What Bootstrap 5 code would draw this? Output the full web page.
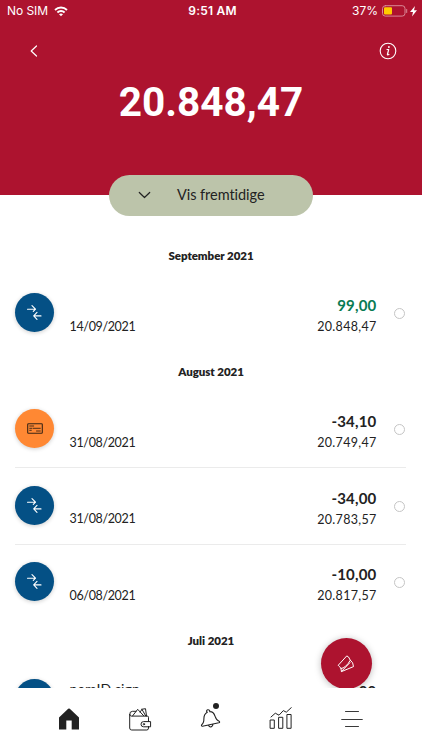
<!DOCTYPE html>
<html lang="da">
<head>
<meta charset="utf-8">
<meta name="viewport" content="width=device-width, initial-scale=1">
<title>Konto</title>
<link href="https://cdn.jsdelivr.net/npm/bootstrap@5.3.0/dist/css/bootstrap.min.css" rel="stylesheet">
<style>
body{font-family:Lato,sans-serif;color:#222;background:#fff;height:750px;overflow:hidden}
svg{display:block;flex:none;fill:none;stroke:currentColor;stroke-linecap:round;stroke-linejoin:round}
.hero{height:194.5px;background:#ad132f;flex:none}
.status{font-family:Inter,sans-serif;height:22px;font-size:12px;line-height:22px;padding:0 4px 0 7px}
.status>div{flex:1 1 0}
.carrier{gap:6px;letter-spacing:-.05px}
.wifi{stroke-linecap:butt}
.clock{font-weight:600;letter-spacing:.2px}
.tools{height:58px;padding:0 25px 0 29px}
.balance{font:700 40.5px/44px Roboto,sans-serif}
.future{width:204px;height:41px;border-radius:21px;background:#bcc4aa;color:#222;margin-top:-20px;font-size:14.5px;z-index:1;padding:0 0 0 29px;flex:none}
.future:hover{background:#b2bb9f}
.future span{margin-left:26px;letter-spacing:-.05px}
.feed{height:472.5px;padding-top:20px;flex:none}
.month{font-size:11.5px;font-weight:800;line-height:16px;height:16px;margin:12px 0;letter-spacing:-.05px;flex:none}
.entry{height:76.4px;margin:0 16px 0 15.4px;flex:none;border-bottom:1px solid #ebebeb}
.entry.final{border-color:transparent}
.disc{width:39px;height:39px;margin-top:17.5px;box-shadow:0 1px 4px #0003;background:#045085;flex:none}
.disc.orange{background:#ff8833;color:#3a2414}
.when{font-size:12.5px;line-height:16px;margin:43px 0 0 15.2px;letter-spacing:-.36px}
.when.title{font-size:14px;margin-top:20px;letter-spacing:.1px}
.sum{margin-top:19.6px;margin-right:17px}
.sum b{display:block;font-size:15px;font-weight:700;line-height:20px;letter-spacing:.2px}
.sum span{display:block;font-size:12.5px;line-height:16px;margin-top:3.8px;letter-spacing:.3px}
.sum .gain{color:#087b53}
.pick{width:11px;height:11px;border:1px solid #c5c5c5;margin:32.5px 1.5px 0 0;flex:none}
.fab{width:51px;height:51px;background:#ad132f;right:50.5px;top:422.5px;box-shadow:0 1px 7px #0004}
.tabs{height:62px;background:#fff;flex:none;padding-left:33.6px}
.tabs>a{width:70.8px;height:62px;color:#222}
.alert-dot{width:6px;height:6px;background:#222;left:38px;top:15px}
</style>
</head>
<body class="d-flex flex-column">
<svg width="0" height="0" class="position-absolute"><defs>
<g id="swap"><path d="M.5 4.2h8M5 .7l3.500 3.500-2.200 2.200M14 10.900H6.800M10 7.400l-3.300 3.500 3.300 3.400"/></g>
</defs></svg>
<header class="hero text-white">
<div class="status d-flex">
<div class="carrier d-flex align-items-center"><span>No SIM</span><svg class="wifi" width="14" height="11" viewBox="0 0 14 11" stroke-width="1.8"><path d="M1 4a8.5 8.5 0 0 1 12 0M3.4 6.5a5.1 5.1 0 0 1 7.2 0"/><path d="m5 8.2q2-1.5 4 0l-2 2z" fill="currentColor" stroke="none"/></svg></div>
<div class="clock text-center">9:51 AM</div>
<div class="d-flex align-items-center justify-content-end"><span>37%</span><svg class="ms-1" width="36" height="12" viewBox="0 0 36 12"><rect x=".5" y=".7" width="22.5" height="10.4" rx="2.8" stroke="#d98997"/><rect x="2" y="2.2" width="8" height="7.4" rx="1" fill="#ffcc00" stroke="none"/><path d="M24.7 4.5v3" stroke="#d98997"/><path d="m33 1-5 6h3l-1 4.5L35 5.3h-3z" fill="#fff" stroke="none"/></svg></div>
</div>
<div class="tools d-flex justify-content-between align-items-center">
<svg width="10" height="14" viewBox="0 0 10 14" stroke-width="1.2"><path d="M7.5 2 2.2 7l5.300 5"/></svg>
<svg width="18" height="18" viewBox="0 0 18 18"><circle cx="9" cy="9" r="7.8" stroke-width="1.1"/><path d="M8 7.500h1.700L8.400 12.500q0 .8 1.500 0" stroke-width="1.2"/><circle cx="9.9" cy="5" r=".9" fill="currentColor" stroke="none"/></svg>
</div>
<div class="balance text-center">20.848,47</div>
</header>
<button class="future btn position-relative border-0 align-self-center d-flex align-items-center"><svg width="13" height="8" viewBox="0 0 13 8" stroke-width="1.2"><path d="m1.300 1.500 5.200 5 5.200-5"/></svg><span>Vis fremtidige</span></button>
<main class="feed position-relative overflow-hidden d-flex flex-column">
<div class="month text-center">September 2021</div>
<div class="entry final d-flex align-items-start">
<div class="disc rounded-circle text-white d-flex align-items-center justify-content-center"><svg width="15" height="15" viewBox="0 0 15 15" stroke-width="1.1"><use href="#swap"/></svg></div>
<div class="when">14/09/2021</div><div class="sum ms-auto text-end"><b class="gain">99,00</b><span>20.848,47</span></div><div class="pick rounded-circle"></div>
</div>
<div class="month text-center">August 2021</div>
<div class="entry d-flex align-items-start">
<div class="disc orange rounded-circle d-flex align-items-center justify-content-center"><svg width="16" height="11" viewBox="0 0 16 11"><rect x=".7" y=".7" width="14.6" height="9.6" rx=".8" stroke-width="1.1"/><path d="M2.700 3h4M2.700 5.300h2M6 5.300h7.300M2.700 7.300h1.600M9.500 8h3.800" stroke-width=".9"/></svg></div>
<div class="when">31/08/2021</div><div class="sum ms-auto text-end"><b>-34,10</b><span>20.749,47</span></div><div class="pick rounded-circle"></div>
</div>
<div class="entry d-flex align-items-start">
<div class="disc rounded-circle text-white d-flex align-items-center justify-content-center"><svg width="15" height="15" viewBox="0 0 15 15" stroke-width="1.1"><use href="#swap"/></svg></div>
<div class="when">31/08/2021</div><div class="sum ms-auto text-end"><b>-34,00</b><span>20.783,57</span></div><div class="pick rounded-circle"></div>
</div>
<div class="entry final d-flex align-items-start">
<div class="disc rounded-circle text-white d-flex align-items-center justify-content-center"><svg width="15" height="15" viewBox="0 0 15 15" stroke-width="1.1"><use href="#swap"/></svg></div>
<div class="when">06/08/2021</div><div class="sum ms-auto text-end"><b>-10,00</b><span>20.817,57</span></div><div class="pick rounded-circle"></div>
</div>
<div class="month text-center">Juli 2021</div>
<div class="entry d-flex align-items-start">
<div class="disc rounded-circle"></div>
<div class="when title">nemID sign</div><div class="sum ms-auto text-end"><b>00</b></div><div class="pick rounded-circle invisible"></div>
</div>
<a href="#" class="fab position-absolute rounded-circle text-white d-flex align-items-center justify-content-center" aria-label="Overfør"><svg width="18" height="18" viewBox="0 0 18 18" stroke-width="1"><path d="M9.500 1.200 1.200 10.300q1.700 1.200 2.700 3.200 2 0 4.600-2.200 2.700-2.300 4.800-6.100L11.700 2.300zM13.300 5.200l2.300 2.600.9 3.800L4.500 16.600l-.6-3.100M13 7.600 4.500 16.400"/></svg></a>
</main>
<nav class="tabs d-flex">
<a href="#" class="d-flex align-items-center justify-content-center" aria-label="Hjem"><svg width="22" height="22" viewBox="0 0 22 22"><path d="M1 21.500V9.500L10.200.7q.8-.6 1.600 0L21 9.500v12h-7.300v-9H8.300v9z" fill="currentColor" stroke="none"/></svg></a>
<a href="#" class="d-flex align-items-center justify-content-center" aria-label="Pung"><svg width="24" height="24" viewBox="0 0 24 24" stroke-width="1"><path d="M20.500 14.500V10.300q0-1.200-1.200-1.200H3.500Q1.700 9 1.700 7.200V21q0 2 2 2h15.100q1.700 0 1.700-2v-1.500M1.700 7.500Q1.500 4.300 4.500 4.300H8M4.500 9 9.700 2.300l6 6.500M12 5l2-2.500 3.800 6.500M13.500 2.300l4-.6 1 7.200"/><path d="M22.200 14.600H15.600a2.600 2.600 0 0 0 0 5.200h6.600z"/><circle cx="15.9" cy="17.2" r=".7"/></svg></a>
<a href="#" class="position-relative d-flex align-items-center justify-content-center" aria-label="Beskeder"><svg width="22" height="22" viewBox="0 0 22 22" stroke-width="1.1"><path d="M7.300 4.200Q3.900 6 3.900 10.500q.1 4.500-2.200 6.200-.8 1.300.8 1.600l16.300-3.500q1.500-.6.300-1.600-2.600-.7-4-4.800Q13.400 3.300 9.600 3.700M6.900 4.400Q6 2.300 7.700 1.800q1.900-.4 2.300 1.900M8.500 17.300q.8 2 2.600 1.600 1.900-.4 1.800-2.600"/></svg><span class="alert-dot position-absolute rounded-circle"></span></a>
<a href="#" class="d-flex align-items-center justify-content-center" aria-label="Overblik"><svg width="24" height="24" viewBox="0 0 24 24"><path d="M1.500 13h3.800v8.300H1.500zM10 10.300h3.800v11H10zM18.300 7.500h3.800v13.800h-3.800zM2 10 6.300 6.200l3.700 2 4.300-4.600 3 1.600L22.300.6"/></svg></a>
<a href="#" class="d-flex align-items-center justify-content-center" aria-label="Menu"><svg width="22" height="18" viewBox="0 0 22 18" stroke-width=".9"><path d="M4.500 1.500h13M.7 9.500h20.600M4.500 16.500h13"/></svg></a>
</nav>
<script src="https://cdn.jsdelivr.net/npm/bootstrap@5.3.0/dist/js/bootstrap.bundle.min.js"></script>
</body>
</html>
